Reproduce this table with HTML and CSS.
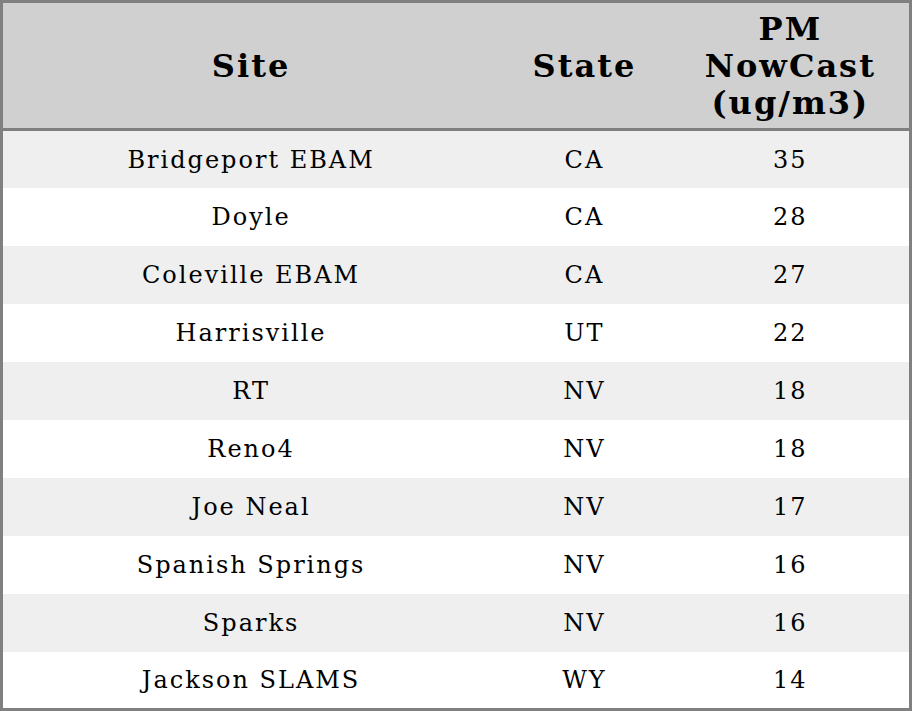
FILE: index.html
```html
<!DOCTYPE html>
<html>
<head>
<meta charset="utf-8">
<link rel="stylesheet" href="styles.css">
</head>
<body>
<table class="aq">
  <colgroup>
    <col class="c-site">
    <col class="c-state">
    <col class="c-pm">
  </colgroup>
  <thead>
    <tr><th>Site</th><th>State</th><th>PM<br>NowCast<br>(ug/m3)</th></tr>
  </thead>
  <tbody>
    <tr><td>Bridgeport EBAM</td><td>CA</td><td>35</td></tr>
    <tr><td>Doyle</td><td>CA</td><td>28</td></tr>
    <tr><td>Coleville EBAM</td><td>CA</td><td>27</td></tr>
    <tr><td>Harrisville</td><td>UT</td><td>22</td></tr>
    <tr><td>RT</td><td>NV</td><td>18</td></tr>
    <tr><td>Reno4</td><td>NV</td><td>18</td></tr>
    <tr><td>Joe Neal</td><td>NV</td><td>17</td></tr>
    <tr><td>Spanish Springs</td><td>NV</td><td>16</td></tr>
    <tr><td>Sparks</td><td>NV</td><td>16</td></tr>
    <tr><td>Jackson SLAMS</td><td>WY</td><td>14</td></tr>
  </tbody>
</table>
</body>
</html>
```

FILE: styles.css
```css
html, body {
  margin: 0;
  padding: 0;
  background: #fff;
}
.aq {
  width: 912px;
  height: 711px;
  border-collapse: collapse;
  border: 3px solid #808080;
  font-family: "DejaVu Serif", serif;
  color: #000;
  table-layout: fixed;
  letter-spacing: 2px;
}
.c-site { width: 494px; }
.c-state { width: 172px; }
.c-pm { width: 240px; }
.aq thead tr {
  height: 128px;
}
.aq th {
  background: #d0d0d0;
  font-size: 32px;
  font-weight: bold;
  line-height: 37px;
  padding: 1px 0 0 2px;
  text-align: center;
  vertical-align: middle;
  border-bottom: 3px solid #808080;
}
.aq tbody tr {
  height: 57px;
}
.aq td {
  font-size: 24px;
  padding: 1px 0 0 2px;
  text-align: center;
  vertical-align: middle;
}
.aq tbody tr:nth-child(odd) td {
  background: #efefef;
}
```
